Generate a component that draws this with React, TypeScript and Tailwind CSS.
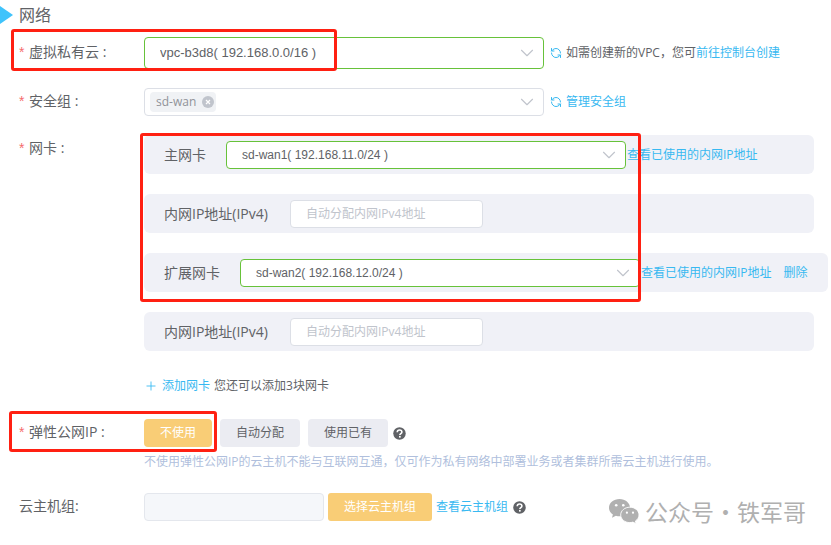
import type { ReactNode } from 'react';
import { ChevronDown, Plus, RefreshCcw } from 'lucide-react';

const HelpIcon = () => (
  <svg viewBox="0 0 26 26" className="h-[13px] w-[13px]">
    <circle cx="13" cy="13" r="12.500" fill="#606266" />
    <path d="M8.500 10.500C8.500 7.500 10.300 6 13.100 6s4.700 1.500 4.700 4.200c0 3.200-4.100 3.200-4.100 6" fill="none" stroke="#fff" strokeWidth="3.200" />
    <rect x="12" y="17.800" width="3.400" height="3.400" fill="#fff" />
  </svg>
);

const WechatIcon = () => (
  <svg viewBox="0 0 30 25" className="h-[25px] w-[30px]">
    <path
      d="M10.500 0C4.700 0 0 3.900 0 8.800c0 2.800 1.500 5.200 3.900 6.800L3 18.700l3.900-2c1.200.4 2.400.6 3.700.6 5.700 0 10.400-3.900 10.400-8.600S16.300 0 10.500 0z"
      fill="#b0b0b0"
    />
    <path
      d="M20.800 8.200c-5 0-9.100 3.400-9.100 7.700s4.100 7.700 9.100 7.700c1.100 0 2.200-.2 3.100-.5l3.200 1.600-.7-2.700c2.200-1.400 3.600-3.600 3.600-6.100 0-4.300-4.100-7.700-9.200-7.700z"
      fill="#b0b0b0"
      stroke="#fff"
      strokeWidth="0.900"
    />
    <circle cx="7.200" cy="6.200" r="1.300" fill="#fff" />
    <circle cx="14.300" cy="6.200" r="1.300" fill="#fff" />
    <circle cx="17.900" cy="13.700" r="1.100" fill="#fff" />
    <circle cx="24" cy="13.700" r="1.100" fill="#fff" />
  </svg>
);

const Highlight = ({ className }: { className: string }) => (
  <div className={`pointer-events-none absolute z-10 rounded-[3px] border-3 border-[#ff2012] ${className}`} />
);

const Label = ({ id, required, children }: { id?: string; required?: boolean; children: ReactNode }) => (
  <label htmlFor={id} className="mb-[2px] flex h-[26px] w-[125px] shrink-0 items-center text-sm">
    {required && <span className="mr-1 w-[6px] font-['Liberation_Sans',sans-serif] text-[#f56c6c]">*</span>}
    {children}
  </label>
);

type SelectProps = { id: string; value: string; size: string };

const Select = ({ id, value, size }: SelectProps) => (
  <div className="relative w-[400px] shrink-0">
    <select
      id={id}
      className={`block w-full appearance-none rounded border border-[#67c23a] bg-white px-[15px] font-['Liberation_Sans',sans-serif] ${size}`}
    >
      <option>{value}</option>
    </select>
    <ChevronDown className="pointer-events-none absolute top-1/2 right-[6px] h-[22px] w-[22px] -translate-y-1/2 text-[#c0c4cc]" strokeWidth={1.25} />
  </div>
);

const Link = ({ children }: { children: ReactNode }) => (
  <a href="#" className="text-xs whitespace-nowrap text-[#38b9f1]">
    {children}
  </a>
);

const Refresh = () => (
  <button aria-label="刷新" className="mr-1 ml-[6px] text-[#38b9f1]">
    <RefreshCcw className="h-3 w-3" strokeWidth={2} />
  </button>
);

const card = 'flex h-[39px] w-max min-w-full items-center rounded-md bg-[#f0f1f7] px-5';

const NicCard = ({ id, title, value, removable }: { id: string; title: string; value: string; removable?: boolean }) => (
  <div className={card}>
    <label htmlFor={id} className="mr-5 text-sm">{title}</label>
    <Select id={id} value={value} size="h-7 text-xs" />
    <span className="ml-px flex gap-3">
      <Link>查看已使用的内网IP地址</Link>
      {removable && <Link>删除</Link>}
    </span>
  </div>
);

const IpCard = ({ id }: { id: string }) => (
  <div className={card}>
    <label htmlFor={id} className="w-[126px] text-sm whitespace-nowrap">内网IP地址(IPv4)</label>
    <input
      id={id}
      placeholder="自动分配内网IPv4地址"
      className="h-7 w-[193px] rounded border border-[#dcdfe6] bg-white px-[15px] text-xs placeholder:text-[#c0c4cc]"
    />
  </div>
);

const App = () => {
  return (
    <main className="bg-white pr-[17px] pb-[22px] pl-[19px] font-['Open_Sans','Noto_Sans_CJK_SC',sans-serif] text-[#606266]">
      <h2 className="-ml-[19px] flex h-[30px] items-center gap-[6px] text-base">
        <svg viewBox="0 0 13 18" className="h-[18px] w-[13px]">
          <path d="M0 0 13 9 0 18z" fill="#3fc3fb" />
        </svg>
        网络
      </h2>

      <div className="relative mt-[7px] flex items-center">
        <Highlight className="-top-2 -left-2 h-[42px] w-[326px]" />
        <Label id="vpc" required>虚拟私有云 :</Label>
        <Select id="vpc" value="vpc-b3d8( 192.168.0.0/16 )" size="h-8 text-[13px]" />
        <Refresh />
        <span className="text-xs whitespace-nowrap">
          如需创建新的VPC，您可<Link>前往控制台创建</Link>
        </span>
      </div>

      <div className="mt-[19px] flex items-center">
        <Label required>安全组 :</Label>
        <div className="flex h-7 w-[400px] shrink-0 items-center rounded border border-[#dcdfe6] pr-[5px] pl-[5px]">
          <span className="flex h-5 items-center gap-[6px] rounded bg-[#f0f2f5] pr-[2px] pl-[6px] text-xs text-[#909399]">
            sd-wan
            <button aria-label="移除 sd-wan">
              <svg viewBox="0 0 12 12" className="h-3 w-3">
                <circle cx="6" cy="6" r="6" fill="#c0c4cc" />
                <path d="m4 4 4 4m0-4L4 8" stroke="#fff" strokeWidth="1.200" />
              </svg>
            </button>
          </span>
          <ChevronDown className="ml-auto h-[22px] w-[22px] text-[#c0c4cc]" strokeWidth={1.25} />
        </div>
        <Refresh />
        <Link>管理安全组</Link>
      </div>

      <div className="mt-[19px] flex">
        <Label required>网卡 :</Label>
        <div className="relative flex min-w-0 flex-1 flex-col gap-5">
          <Highlight className="-top-[2px] -left-1 h-[169px] w-[501px]" />
          <NicCard id="nic1" title="主网卡" value="sd-wan1( 192.168.11.0/24 )" />
          <IpCard id="ip1" />
          <NicCard id="nic2" title="扩展网卡" value="sd-wan2( 192.168.12.0/24 )" removable />
          <IpCard id="ip2" />
        </div>
      </div>

      <div className="mt-[25px] ml-[125px] flex h-5 items-center text-xs">
        <button className="mr-1 flex items-center gap-1 text-[#38b9f1]">
          <Plus className="h-[14px] w-[14px]" strokeWidth={1.5} />
          添加网卡
        </button>
        您还可以添加3块网卡
      </div>

      <div className="relative mt-[23px] flex items-center">
        <Highlight className="-top-2 -left-[10px] h-[41px] w-[208px]" />
        <Label required>弹性公网IP :</Label>
        <div className="flex gap-2 text-xs">
          <button className="h-7 rounded bg-[#f9cd76] px-4 text-white">不使用</button>
          <button className="h-7 rounded bg-[#ebecf2] px-4">自动分配</button>
          <button className="h-7 rounded bg-[#ebecf2] px-4">使用已有</button>
        </div>
        <button aria-label="帮助" className="ml-[5px]">
          <HelpIcon />
        </button>
      </div>
      <p className="mt-1 ml-[125px] text-xs leading-[22px] text-[#b0bfdd]">
        不使用弹性公网IP的云主机不能与互联网互通，仅可作为私有网络中部署业务或者集群所需云主机进行使用。
      </p>

      <div className="mt-5 flex h-7 items-center">
        <Label id="group">云主机组:</Label>
        <input id="group" disabled className="h-7 w-[180px] rounded border border-[#e4e7ed] bg-[#f5f7fa] px-[15px] text-xs" />
        <button className="mx-1 h-7 rounded-[3px] bg-[#f9cd76] px-4 text-xs whitespace-nowrap text-white">选择云主机组</button>
        <Link>查看云主机组</Link>
        <button aria-label="帮助" className="ml-[5px]">
          <HelpIcon />
        </button>
        <div className="mt-2 mr-2 ml-auto flex items-center gap-[6px] font-['Noto_Sans_CJK_SC',sans-serif] text-[23px] whitespace-nowrap text-[#b0b0b0]">
          <WechatIcon />
          公众号·铁军哥
        </div>
      </div>
    </main>
  );
};

export default App;
